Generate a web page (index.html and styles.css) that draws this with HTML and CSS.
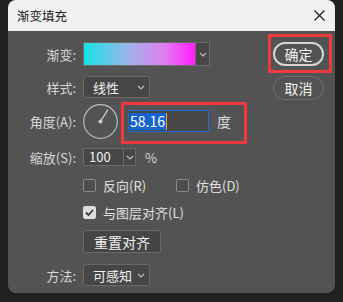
FILE: index.html
```html
<!DOCTYPE html>
<html lang="zh-CN">
<head>
    <meta charset="UTF-8">
    <title>渐变填充</title>
    <link rel="stylesheet" href="styles.css">
</head>
<body>
    <div class="dialog">
        <div class="titlebar">
            <span class="title">渐变填充</span>
            <svg class="close" width="11" height="11" viewBox="0 0 11 11">
                <path d="M0.5 0.5 L10.5 10.5 M10.5 0.5 L0.5 10.5" stroke="#1b1b1b" stroke-width="1.2" fill="none"/>
            </svg>
        </div>
        <div class="body">
            <div class="form">
                <div class="row row-grad">
                    <span class="label">渐变:</span>
                    <div class="grad-picker">
                        <div class="swatch"></div>
                        <div class="drop">
                            <svg width="8" height="5" viewBox="0 0 8 5"><path d="M1 1 L4 4 L7 1" stroke="#bdbdbd" stroke-width="1.2" fill="none"/></svg>
                        </div>
                    </div>
                </div>

                <div class="row row-style">
                    <span class="label">样式:</span>
                    <div class="select">
                        <span>线性</span>
                        <svg width="8" height="5" viewBox="0 0 8 5"><path d="M1 1 L4 4 L7 1" stroke="#bdbdbd" stroke-width="1.2" fill="none"/></svg>
                    </div>
                </div>

                <div class="row row-angle">
                    <span class="label">角度(A):</span>
                    <svg class="dial" width="36" height="36" viewBox="0 0 36 36">
                        <circle cx="17.5" cy="18.5" r="16.8" stroke="#bcbcbc" stroke-width="1.2" fill="none"/>
                        <line x1="17.5" y1="18.5" x2="24.9" y2="6.6" stroke="#cfcfcf" stroke-width="1.3"/>
                        <circle cx="17.5" cy="18.5" r="2" fill="#cfcfcf"/>
                    </svg>
                    <div class="highlight angle-box">
                        <div class="text-input"><span class="sel">58.16</span></div>
                        <span class="unit">度</span>
                    </div>
                </div>

                <div class="row row-scale">
                    <span class="label">缩放(S):</span>
                    <div class="combo">
                        <div class="combo-input">100</div>
                        <div class="drop small">
                            <svg width="8" height="5" viewBox="0 0 8 5"><path d="M1 1 L4 4 L7 1" stroke="#bdbdbd" stroke-width="1.2" fill="none"/></svg>
                        </div>
                    </div>
                    <span class="percent">%</span>
                </div>

                <div class="row row-check1">
                    <span class="label"></span>
                    <div class="check-item first"><span class="checkbox"></span>反向(R)</div>
                    <div class="check-item"><span class="checkbox"></span>仿色(D)</div>
                </div>

                <div class="row row-check2">
                    <span class="label"></span>
                    <div class="check-item">
                        <span class="checkbox checked">
                            <svg width="11" height="11" viewBox="0 0 11 11"><path d="M2 5.5 L4.5 8 L9 3" stroke="#333" stroke-width="1.8" fill="none"/></svg>
                        </span>与图层对齐(L)
                    </div>
                </div>

                <div class="row row-reset">
                    <span class="label"></span>
                    <button class="btn">重置对齐</button>
                </div>

                <div class="row row-method">
                    <span class="label">方法:</span>
                    <div class="select">
                        <span>可感知</span>
                        <svg width="8" height="5" viewBox="0 0 8 5"><path d="M1 1 L4 4 L7 1" stroke="#bdbdbd" stroke-width="1.2" fill="none"/></svg>
                    </div>
                </div>
            </div>

            <div class="actions">
                <div class="highlight ok-box">
                    <button class="pill primary">确定</button>
                </div>
                <button class="pill cancel">取消</button>
            </div>
        </div>
    </div>
</body>
</html>
```

FILE: styles.css
```css
/* Core Styling */
*, *:before, *:after {
    margin: 0;
    padding: 0;
    box-sizing: border-box;
}

body {
    background-color: #202020;
    font-family: "Noto Sans CJK SC", "Microsoft YaHei", sans-serif;
    color: #dedede;
}

.dialog {
    margin-left: 8px;
    width: 327px;
    height: 293px;
    border-radius: 8px;
    overflow: hidden;
    background-color: #535353;
}

.titlebar {
    height: 31px;
    background-color: #f0f0f0;
    display: flex;
    align-items: center;
    justify-content: space-between;
    padding: 0 10px 0 9px;
}

.title {
    font-size: 12.5px;
    color: #1b1b1b;
}

.body {
    display: flex;
}

.form {
    width: 260px;
    padding-top: 11px;
}

.row {
    display: flex;
    align-items: center;
    font-size: 13px;
}

.label {
    width: 68px;
    margin-right: 7px;
    text-align: right;
    color: #d8d8d8;
    flex-shrink: 0;
}

.row-grad { height: 24px; }
.row-style { height: 22px; margin-top: 10px; }
.row-angle { height: 36px; margin-top: 5px; align-items: flex-start; }
.row-angle .label { align-self: center; }
.row-scale { height: 18px; margin-top: 9px; }
.row-check1 { height: 14px; margin-top: 12px; }
.row-check2 { height: 14px; margin-top: 13px; }
.row-reset { height: 23px; margin-top: 11px; }
.row-method { height: 22px; margin-top: 11px; }

/* Gradient picker */
.grad-picker {
    display: flex;
    height: 24px;
}

.swatch {
    width: 113px;
    height: 24px;
    border: 1px solid #6a6a6a;
    background: linear-gradient(to right, #12e2e4, #9fb4e9 40%, #e07ef0 72%, #ff1eff);
}

.drop {
    width: 14px;
    height: 24px;
    background-color: #474747;
    border: 1px solid #6a6a6a;
    border-left: none;
    display: flex;
    align-items: center;
    justify-content: center;
}

.drop.small {
    width: 12px;
    height: 18px;
}

/* Select */
.select {
    width: 67px;
    height: 22px;
    background-color: #464646;
    border: 1px solid #6a6a6a;
    border-radius: 3px;
    display: flex;
    align-items: center;
    justify-content: space-between;
    padding: 0 4px 0 9px;
    font-size: 13px;
    color: #f2f2f2;
}

/* Angle */
.dial {
    flex-shrink: 0;
}

.highlight {
    border: 3px solid #ee3a3d;
}

.angle-box {
    display: flex;
    align-items: flex-start;
    margin: -1px 0 0 2px;
    padding: 5px 13px 9px 4px;
}

.text-input {
    width: 81px;
    height: 22px;
    border: 1px solid #1d6fd8;
    background-color: #474747;
    padding: 2px 0 0 1px;
    font-size: 14px;
    line-height: 17px;
}

.sel {
    display: inline-block;
    background-color: #1463cf;
    color: #fff;
    border-right: 1px solid #f0a040;
    padding-right: 1px;
}

.unit {
    margin-left: 8px;
    font-size: 14px;
    line-height: 22px;
    color: #dedede;
}

/* Scale combo */
.combo {
    display: flex;
}

.combo-input {
    width: 41px;
    height: 18px;
    background-color: #474747;
    border: 1px solid #6a6a6a;
    padding-left: 5px;
    font-size: 13px;
    line-height: 16px;
    color: #f2f2f2;
}

.percent {
    margin-left: 9px;
    color: #d8d8d8;
}

/* Checkboxes */
.check-item {
    display: flex;
    align-items: center;
    color: #e0e0e0;
}

.check-item.first {
    width: 93px;
}

.checkbox {
    width: 13px;
    height: 13px;
    margin-right: 7px;
    border: 1px solid #8a8a8a;
    border-radius: 2px;
    background-color: #4d4d4d;
    display: flex;
    align-items: center;
    justify-content: center;
}

.checkbox.checked {
    background-color: #dcdcdc;
    border-color: #dcdcdc;
}

/* Buttons */
.btn {
    width: 78px;
    height: 23px;
    background-color: #454545;
    border: 1px solid #6a6a6a;
    border-radius: 3px;
    font-family: inherit;
    font-size: 14px;
    color: #f2f2f2;
}

.actions {
    padding-top: 3px;
}

.ok-box {
    width: 64px;
    padding: 5px 5px 4px 2px;
}

.pill {
    display: block;
    width: 51px;
    height: 24px;
    border-radius: 12px;
    background: transparent;
    font-family: inherit;
    font-size: 14px;
    color: #f2f2f2;
    border: 1px solid #707070;
}

.pill.primary {
    border: 2px solid #d6d6d6;
}

.pill.cancel {
    margin: 3px 0 0 5px;
}
```
